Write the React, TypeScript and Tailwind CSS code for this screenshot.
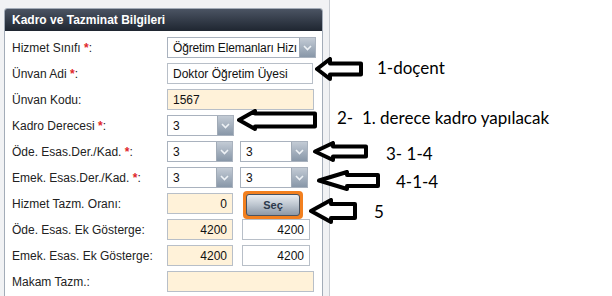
import React from "react";

const font = { fontFamily: '"Liberation Sans", Arial, sans-serif' };

function Select({ value, w }: { value: string; w: string }) {
  return (
    <div className={`${w} h-[21px] flex border border-[#a9b2be] bg-white overflow-hidden`}>
      <div className="flex-1 pl-[5px] flex items-center text-[12px] tracking-[-0.15px] text-[#111] whitespace-nowrap overflow-hidden leading-none">
        {value}
      </div>
      <div className="w-[16px] h-full bg-gradient-to-b from-[#c3cbd5] to-[#8897a8] flex items-center justify-center border-l border-[#a0aab6] shrink-0">
        <svg width="9" height="6" viewBox="0 0 9 6">
          <path d="M1 1 L4.5 4.5 L8 1" fill="none" stroke="#eef2f6" strokeWidth="1.6" />
        </svg>
      </div>
    </div>
  );
}

function Input({ value, w, cream, right }: { value?: string; w: string; cream?: boolean; right?: boolean }) {
  return (
    <div
      className={`${w} h-[21px] border border-[#b8bfc8] ${cream ? "bg-[#fff2d9]" : "bg-white"} flex items-center px-[5px] text-[12px] text-[#111] leading-none ${right ? "justify-end" : ""}`}
    >
      {value}
    </div>
  );
}

function Row({ label, star, children }: { label: string; star?: boolean; children: React.ReactNode }) {
  return (
    <div className="h-[26px] flex items-start">
      <div className="w-[155px] h-[21px] flex items-center text-[12px] text-[#222] whitespace-pre leading-none">
        <span>
          {label}
          {star ? " " : ""}
          {star && <span className="text-[#e0262b] font-bold">*</span>}
          :
        </span>
      </div>
      <div className="flex items-start">{children}</div>
    </div>
  );
}

function Arrow({ x, y, w, h, head, shaft }: { x: number; y: number; w: number; h: number; head: number; shaft: number }) {
  const cy = h / 2;
  const pts = [
    [2, cy],
    [head, 2],
    [head, cy - shaft / 2],
    [w - 2, cy - shaft / 2],
    [w - 2, cy + shaft / 2],
    [head, cy + shaft / 2],
    [head, h - 2],
  ]
    .map((p) => p.join(","))
    .join(" ");
  return (
    <svg
      className="absolute"
      style={{ left: x, top: y }}
      width={w}
      height={h}
      viewBox={`0 0 ${w} ${h}`}
    >
      <polygon points={pts} fill="white" stroke="black" strokeWidth="4" strokeLinejoin="round" />
    </svg>
  );
}

const note = "absolute text-[17px] text-black leading-none whitespace-pre";
const noteFont = { fontFamily: "Lato, sans-serif" };

export default function App() {
  return (
    <div className="w-[612px] h-[296px] bg-white relative overflow-hidden flex" style={font}>
      <div className="w-[330px] h-full bg-[#f1f2f4] border-r border-[#c8ccd2] pt-2 pl-1 pr-[6px] shrink-0">
        <div className="w-[319px] h-[300px] border border-[#a3acb8] rounded-t-[3px] bg-white overflow-hidden">
          <div className="h-[22px] bg-gradient-to-b from-[#4b5463] to-[#1f2631] flex items-center pl-[7px] text-white text-[12px] font-bold leading-none">
            Kadro ve Tazminat Bilgileri
          </div>
          <div className="pl-[7px] pt-[6px]">
            <Row label="Hizmet Sınıfı" star>
              <Select value="Öğretim Elemanları Hizı" w="w-[149px]" />
            </Row>
            <Row label="Ünvan Adi" star>
              <Input value="Doktor Öğretim Üyesi" w="w-[146px]" />
            </Row>
            <Row label="Ünvan Kodu">
              <Input value="1567" w="w-[147px]" cream />
            </Row>
            <Row label="Kadro Derecesi" star>
              <Select value="3" w="w-[67px]" />
            </Row>
            <Row label="Öde. Esas.Der./Kad." star>
              <div className="flex gap-[7px]">
                <Select value="3" w="w-[66px]" />
                <Select value="3" w="w-[68px]" />
              </div>
            </Row>
            <Row label="Emek. Esas.Der./Kad." star>
              <div className="flex gap-[7px]">
                <Select value="3" w="w-[66px]" />
                <Select value="3" w="w-[68px]" />
              </div>
            </Row>
            <Row label="Hizmet Tazm. Oranı">
              <div className="flex items-start gap-[10px]">
                <Input value="0" w="w-[66px]" cream right />
                <div className="-mt-[2px] w-[60px] h-[28px] rounded-[4px] bg-[#f2801f] p-[3px]">
                  <div className="w-full h-full rounded-[3px] border border-[#4a5360] bg-gradient-to-b from-[#e9edf1] via-[#bcc5cf] to-[#8d98a6] flex items-center justify-center text-[11px] font-bold text-[#2c3a4c] leading-none">
                    Seç
                  </div>
                </div>
              </div>
            </Row>
            <Row label="Öde. Esas. Ek Gösterge">
              <div className="flex gap-[9px]">
                <Input value="4200" w="w-[66px]" cream right />
                <Input value="4200" w="w-[68px]" right />
              </div>
            </Row>
            <Row label="Emek. Esas. Ek Gösterge">
              <div className="flex gap-[9px]">
                <Input value="4200" w="w-[66px]" cream right />
                <Input value="4200" w="w-[68px]" right />
              </div>
            </Row>
            <Row label="Makam Tazm.">
              <Input w="w-[147px]" cream />
            </Row>
          </div>
        </div>
      </div>

      <Arrow x={315} y={57} w={48} h={24} head={15} shaft={11} />
      <Arrow x={237} y={109} w={80} h={22} head={18} shaft={13} />
      <Arrow x={313} y={141} w={55} h={21} head={20} shaft={10} />
      <Arrow x={317} y={170} w={63} h={21} head={30} shaft={11} />
      <Arrow x={309} y={198} w={48} h={26} head={22} shaft={14} />

      <div className={note} style={{ ...noteFont, left: 377, top: 59 }}>1-doçent</div>
      <div className={note} style={{ ...noteFont, left: 337, top: 109 }}>2-  1. derece kadro yapılacak</div>
      <div className={note} style={{ ...noteFont, left: 386, top: 145 }}>3- 1-4</div>
      <div className={note} style={{ ...noteFont, left: 396, top: 173 }}>4-1-4</div>
      <div className={note} style={{ ...noteFont, left: 374, top: 203 }}>5</div>
    </div>
  );
}
